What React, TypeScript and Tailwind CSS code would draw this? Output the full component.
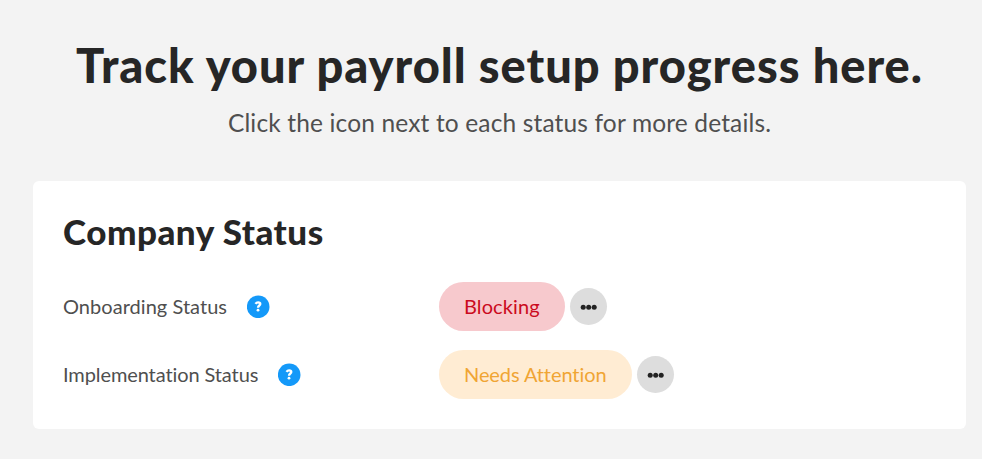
const Help = () => (
  <svg width="23" height="23" viewBox="0 0 23 23" fill="none" className="shrink-0">
    <circle cx="11.2" cy="11.8" r="11.3" fill="#1499f9" />
    <path d="M8.5 8.8C9.2 7.8 10 7.4 11.1 7.4C12.4 7.4 13.3 8 13.3 9C13.3 10.5 11 10.6 11 12.7" stroke="white" strokeWidth="2.3" />
    <circle cx="11" cy="15.2" r="1.4" fill="white" />
  </svg>
);

const More = () => (
  <button aria-label="More details" className="flex size-[37px] items-center justify-center rounded-full bg-[#dddddd]">
    <svg width="18" height="6" viewBox="0 0 18 6" fill="#222">
      <circle cx="3.2" cy="3.2" r="2.5" />
      <circle cx="8.7" cy="3.2" r="2.5" />
      <circle cx="14.2" cy="3.2" r="2.5" />
    </svg>
  </button>
);

export default function App() {
  return (
    <main className="flex h-[459px] w-[982px] flex-col bg-[#f3f3f3] font-['Lato',sans-serif] whitespace-nowrap text-[#4f4f4f]">
      <header className="flex h-[181px] flex-col items-center pl-[17px] pt-[42px]">
        <h1 className="text-[47px] leading-[47px] font-black tracking-[0.98px] text-[#262626]">Track your payroll setup progress here.</h1>
        <p className="mt-[21px] text-[24.5px] leading-[25px] tracking-[0.15px]">Click the icon next to each status for more details.</p>
      </header>
      <section className="ml-[33px] h-[248px] w-[933px] rounded-[6px] bg-white pl-[30px] pt-[33px]">
        <h2 className="text-[35px] leading-[34px] font-black tracking-[0.5px] text-[#262626]">Company Status</h2>
        <div className="mt-[34px] flex h-[49px] items-center">
          <div className="flex w-[376px] items-center gap-[20px]">
            <span className="w-[164px] pb-[2px] text-[20px] leading-[20px] tracking-[0.04px]">Onboarding Status</span>
            <Help />
          </div>
          <div className="mr-[5px] flex h-[49px] w-[126px] items-center rounded-full bg-[#f7c9cd] pb-[2px] pl-[25px] text-[20px] leading-[20px] tracking-[0.1px] text-[#cb0b20]">Blocking</div>
          <More />
        </div>
        <div className="mt-[19px] flex h-[49px] items-center">
          <div className="flex w-[376px] items-center gap-[20px]">
            <span className="w-[195px] pb-[2px] text-[20px] leading-[20px] tracking-[-0.1px]">Implementation Status</span>
            <Help />
          </div>
          <div className="mr-[5px] flex h-[49px] w-[193px] items-center rounded-full bg-[#ffecd3] pb-[2px] pl-[25px] text-[20px] leading-[20px] tracking-[-0.08px] text-[#f0a534]">Needs Attention</div>
          <More />
        </div>
      </section>
    </main>
  );
}
